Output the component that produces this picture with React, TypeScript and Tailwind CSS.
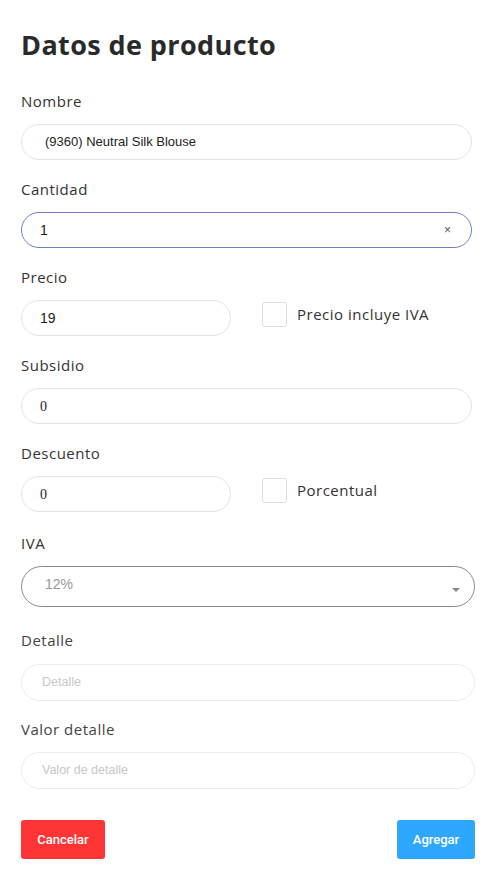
import React from 'react';

const labelCls = "block text-[15px] leading-[20px] tracking-[0.5px] font-['Open_Sans',sans-serif]";

const Label: React.FC<{ children: React.ReactNode; className?: string }> = ({ children, className }) => (
  <label className={`${labelCls} ${className || 'text-[#333]'}`}>{children}</label>
);

const TextBox: React.FC<{ value: string; className?: string; focused?: boolean; clear?: boolean; serif?: boolean; pad?: string; size?: string }> = ({ value, className, focused, clear, serif, pad, size }) => (
  <div
    className={`flex items-center h-[36px] rounded-full bg-white pr-[20px] border ${pad || 'pl-[18px]'} ${focused ? 'border-[#6f7fcb]' : 'border-[#e2e2e2]'} ${className || ''}`}
  >
    <span
      className={`flex-1 text-[#222] ${size || 'text-[14px]'} ${serif ? "font-['Liberation_Serif',serif]" : "font-['Liberation_Sans',Arial,sans-serif]"}`}
    >
      {value}
    </span>
    {clear && <span className="text-[12px] text-[#555] font-['Liberation_Sans',sans-serif]">×</span>}
  </div>
);

const CheckLabel: React.FC<{ text: string }> = ({ text }) => (
  <div className="flex items-center gap-[10px] ml-[31px] -mt-[8px]">
    <span className="w-[25px] h-[25px] rounded-[3px] border border-[#dcdcdc] bg-white" />
    <span className="text-[15px] tracking-[0.5px] text-[#333] font-['Open_Sans',sans-serif]">{text}</span>
  </div>
);

const App: React.FC = () => {
  return (
    <div className="min-h-[872px] w-[495px] bg-white px-[21px] pt-[28px]">
      <h2 className="text-[27px] leading-[34px] font-bold text-[#2a2a2a] font-['Open_Sans',sans-serif] tracking-[0.4px]">
        Datos de producto
      </h2>

      <div className="mt-[29px]">
        <Label className="mb-[13px] text-[#333]">Nombre</Label>
        <TextBox value="(9360) Neutral Silk Blouse" className="w-[451px]" pad="pl-[23px]" size="text-[13px]" />
      </div>
      <div className="mt-[19px]">
        <Label className="mb-[13px] text-[#333]">Cantidad</Label>
        <TextBox value="1" focused clear className="w-[451px]" />
      </div>
      <div className="mt-[19px]">
        <Label className="mb-[13px] text-[#333]">Precio</Label>
        <div className="flex items-center">
          <TextBox value="19" className="w-[210px]" />
          <CheckLabel text="Precio incluye IVA" />
        </div>
      </div>
      <div className="mt-[19px]">
        <Label className="mb-[13px] text-[#333]">Subsidio</Label>
        <TextBox value="0" serif className="w-[451px]" />
      </div>
      <div className="mt-[19px]">
        <Label className="mb-[13px] text-[#333]">Descuento</Label>
        <div className="flex items-center">
          <TextBox value="0" serif className="w-[210px]" />
          <CheckLabel text="Porcentual" />
        </div>
      </div>
      <div className="mt-[21px]">
        <Label className="mb-[13px] text-[#333]">IVA</Label>
        <div className="flex items-center h-[41px] w-[454px] rounded-full border border-[#8a8a8a] pl-[23px] pr-[14px]">
          <span className="flex-1 font-['Liberation_Sans',Arial,sans-serif] text-[14px] text-[#999] -mt-[4px]">12%</span>
          <svg width="8" height="4" viewBox="0 0 8 4" className="mt-[6px]">
            <path d="M0 0 L8 0 L4 4 Z" fill="#888" />
          </svg>
        </div>
      </div>
      <div className="mt-[23px]">
        <Label className="mb-[14px] text-[#444]">Detalle</Label>
        <div className="flex items-center h-[37px] w-[454px] rounded-full border border-[#ececec] pl-[20px]">
          <span className="font-['Liberation_Sans',Arial,sans-serif] text-[12.5px] text-[#c8c8c8]">Detalle</span>
        </div>
      </div>
      <div className="mt-[18px]">
        <Label className="mb-[13px] text-[#444]">Valor detalle</Label>
        <div className="flex items-center h-[37px] w-[454px] rounded-full border border-[#ececec] pl-[20px]">
          <span className="font-['Liberation_Sans',Arial,sans-serif] text-[12.5px] text-[#c8c8c8]">Valor de detalle</span>
        </div>
      </div>

      <div className="mt-[31px] flex justify-between w-[454px]">
        <button className="h-[39px] w-[84px] rounded-[3px] bg-[#ff3535] text-white text-[13px] font-medium font-['Roboto',sans-serif]">
          Cancelar
        </button>
        <button className="h-[39px] w-[78px] rounded-[3px] bg-[#2ea8ff] text-white text-[13px] font-medium font-['Roboto',sans-serif]">
          Agregar
        </button>
      </div>
    </div>
  );
};

export default App;
